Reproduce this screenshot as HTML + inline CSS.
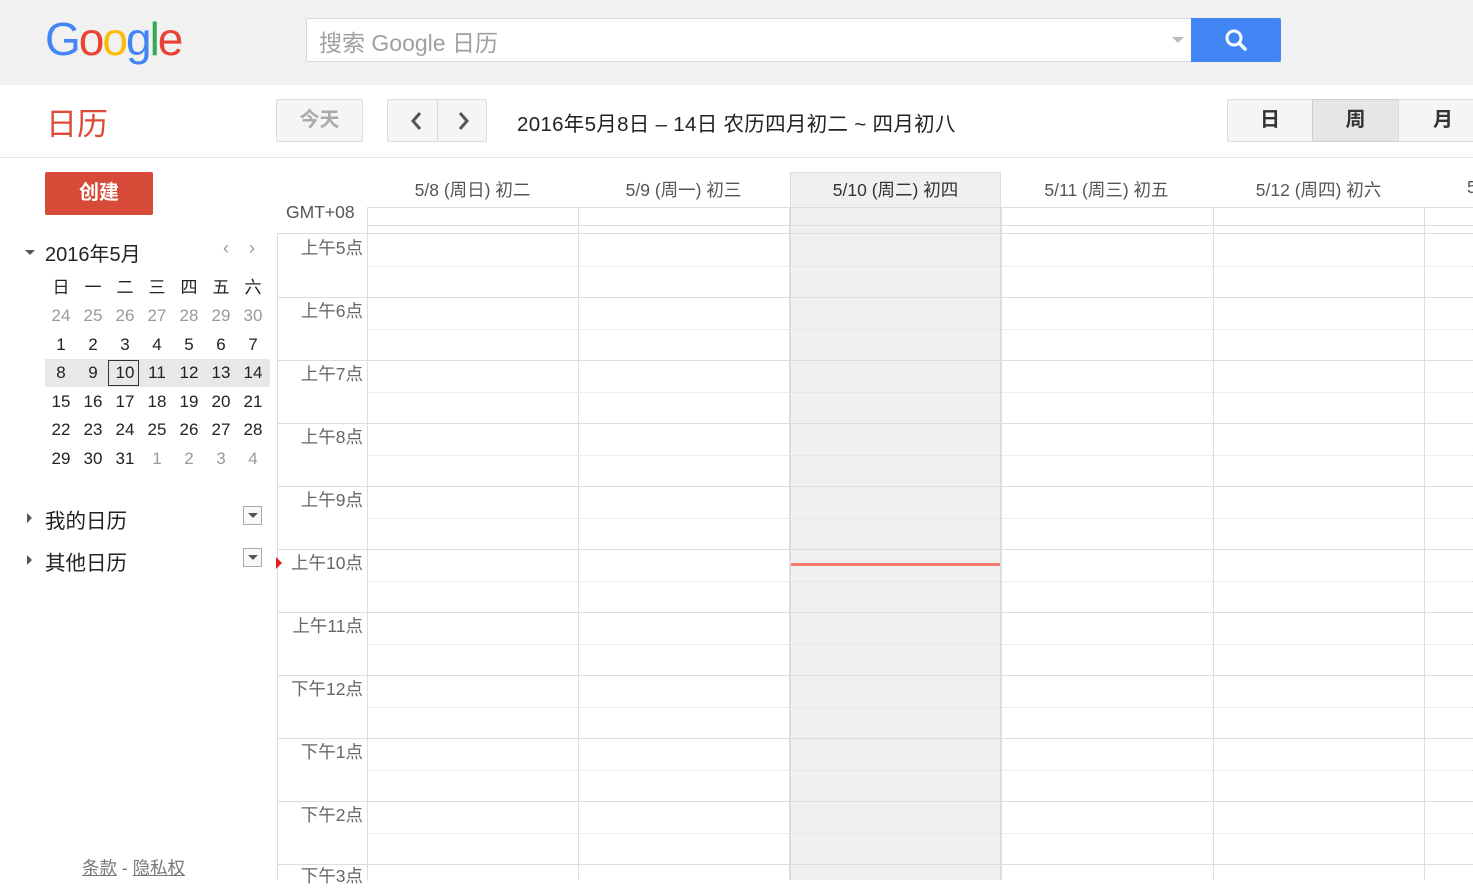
<!DOCTYPE html>
<html><head><meta charset="utf-8"><style>
*{margin:0;padding:0;box-sizing:border-box}
body{width:1473px;height:880px;overflow:hidden;background:#fff;font-family:"Liberation Sans","Noto Sans CJK SC",sans-serif;position:relative;color:#222}
.a{position:absolute}
.top{left:0;top:0;width:1473px;height:85px;background:#f1f1f1}
.logo{left:45px;top:12px;font-size:46px;letter-spacing:-2px;font-family:"Liberation Sans",sans-serif}
.search{left:306px;top:18px;width:886px;height:44px;background:#fff;border:1px solid #d9d9d9;font-size:23px;color:#a0a0a0;padding:5px 12px}
.sbtn{left:1191px;top:18px;width:90px;height:44px;background:#4285f4;border-radius:0 2px 2px 0}
.btn{background:#f5f5f5;border:1px solid #dcdcdc;border-radius:2px;text-align:center;color:#444}
.hl{background:#e8e8e8}
.day{font-size:17.5px;color:#555;text-align:center;width:211px}
.mini{font-size:17px;text-align:center;width:32px}
.g{color:#999}
.tl{font-size:17.5px;color:#666;text-align:right;width:86px;left:277px}
</style></head><body>
<div class="a top"></div>
<div class="a logo"><span style="color:#4285f4">G</span><span style="color:#ea4335">o</span><span style="color:#fbbc05">o</span><span style="color:#4285f4">g</span><span style="color:#34a853">l</span><span style="color:#ea4335">e</span></div>
<div class="a search">搜索 Google 日历</div>
<div class="a" style="left:1172px;top:37px;width:0;height:0;border-left:6px solid transparent;border-right:6px solid transparent;border-top:6px solid #bbb"></div>
<div class="a sbtn"><svg width="90" height="44"><circle cx="43" cy="20" r="7" fill="none" stroke="#fff" stroke-width="3"/><line x1="48" y1="25" x2="54" y2="31" stroke="#fff" stroke-width="3.5" stroke-linecap="round"/></svg></div>
<div class="a" style="left:46px;top:99px;font-size:31px;color:#dd4b39">日历</div>
<div class="a btn" style="left:276px;top:99px;width:87px;height:43px;font-size:20px;line-height:41px;color:#aaa;font-weight:bold">今天</div>
<div class="a btn" style="left:387px;top:99px;width:100px;height:43px"><div class="a" style="left:49px;top:0;width:1px;height:41px;background:#dcdcdc"></div>
<svg class="a" style="left:0;top:0" width="98" height="41"><path d="M32 13 L25 21 L32 29" fill="none" stroke="#555" stroke-width="3"/><path d="M72 13 L79 21 L72 29" fill="none" stroke="#555" stroke-width="3"/></svg></div>
<div class="a" style="left:517px;top:107px;font-size:20.5px;color:#222;letter-spacing:0.3px">2016年5月8日 – 14日 农历四月初二 ~ 四月初八</div>
<div class="a btn" style="left:1227px;top:99px;width:86px;height:43px;font-size:20px;line-height:41px;font-weight:bold;color:#333">日</div>
<div class="a btn" style="left:1312px;top:99px;width:87px;height:43px;font-size:20px;line-height:41px;font-weight:bold;color:#333;background:#e6e6e6;border-color:#ccc">周</div>
<div class="a btn" style="left:1398px;top:99px;width:90px;height:43px;font-size:20px;line-height:41px;font-weight:bold;color:#333">月</div>
<div class="a" style="left:0;top:157px;width:1473px;height:1px;background:#e5e5e5"></div>
<div class="a" style="left:45px;top:172px;width:108px;height:43px;background:#d84a38;border-radius:2px;color:#fff;font-size:20px;font-weight:bold;text-align:center;line-height:43px">创建</div>
<div class="a" style="left:25px;top:250px;border-left:5px solid transparent;border-right:5px solid transparent;border-top:5px solid #555"></div>
<div class="a" style="left:45px;top:238px;font-size:20px">2016年5月</div>
<div class="a" style="left:223px;top:238px;font-size:18px;color:#999">‹&nbsp;&nbsp;&nbsp;&nbsp;›</div>
<div class="a hl" style="left:45px;top:359px;width:225px;height:28px"></div>
<div class="a" style="left:108px;top:360px;width:31px;height:26px;border:1px solid #333"></div>
<div class="a" style="left:45px;top:277px">
<div style="display:flex;height:28px;line-height:22px"><div class="mini">日</div><div class="mini">一</div><div class="mini">二</div><div class="mini">三</div><div class="mini">四</div><div class="mini">五</div><div class="mini">六</div></div>
<div style="display:flex;height:29px;line-height:22px" class="g"><div class="mini">24</div><div class="mini">25</div><div class="mini">26</div><div class="mini">27</div><div class="mini">28</div><div class="mini">29</div><div class="mini">30</div></div>
<div style="display:flex;height:28px;line-height:22px"><div class="mini">1</div><div class="mini">2</div><div class="mini">3</div><div class="mini">4</div><div class="mini">5</div><div class="mini">6</div><div class="mini">7</div></div>
<div style="display:flex;height:29px;line-height:22px"><div class="mini">8</div><div class="mini">9</div><div class="mini">10</div><div class="mini">11</div><div class="mini">12</div><div class="mini">13</div><div class="mini">14</div></div>
<div style="display:flex;height:28px;line-height:22px"><div class="mini">15</div><div class="mini">16</div><div class="mini">17</div><div class="mini">18</div><div class="mini">19</div><div class="mini">20</div><div class="mini">21</div></div>
<div style="display:flex;height:29px;line-height:22px"><div class="mini">22</div><div class="mini">23</div><div class="mini">24</div><div class="mini">25</div><div class="mini">26</div><div class="mini">27</div><div class="mini">28</div></div>
<div style="display:flex;height:28px;line-height:22px"><div class="mini">29</div><div class="mini">30</div><div class="mini">31</div><div class="mini g">1</div><div class="mini g">2</div><div class="mini g">3</div><div class="mini g">4</div></div>
</div>
<div class="a" style="left:27px;top:513px;border-top:5px solid transparent;border-bottom:5px solid transparent;border-left:5px solid #555"></div>
<div class="a" style="left:45px;top:504px;font-size:20.5px">我的日历</div>
<div class="a" style="left:27px;top:555px;border-top:5px solid transparent;border-bottom:5px solid transparent;border-left:5px solid #555"></div>
<div class="a" style="left:45px;top:546px;font-size:20.5px">其他日历</div>
<div class="a" style="left:243px;top:506px;width:19px;height:19px;border:1px solid #aaa;background:#f8f8f8"><div style="margin:6px auto 0;width:0;border-left:5px solid transparent;border-right:5px solid transparent;border-top:5px solid #555"></div></div>
<div class="a" style="left:243px;top:548px;width:19px;height:19px;border:1px solid #aaa;background:#f8f8f8"><div style="margin:6px auto 0;width:0;border-left:5px solid transparent;border-right:5px solid transparent;border-top:5px solid #555"></div></div>
<div class="a" style="left:82px;top:855px;font-size:17.5px;color:#777"><u>条款</u> - <u>隐私权</u></div>
<!-- grid -->
<div class="a" style="left:790px;top:172px;width:211px;height:708px;background:#f0f0f0;border:1px solid #ddd;border-bottom:none"></div>
<div class="a" style="left:286px;top:202px;font-size:17.5px;color:#555">GMT+08</div>
<div class="a" style="left:367px;top:207px;width:1106px;height:19px;border-top:1px solid #ddd;border-bottom:1px solid #ddd"></div>
<div class="a" style="left:277px;top:233px;width:1196px;height:1px;background:#ddd"></div>
<div class="a" style="left:277px;top:233px;width:1px;height:647px;background:#ddd"></div>
<div class="a day" style="left:367px;top:177px">5/8 (周日) 初二</div>
<div class="a day" style="left:578px;top:177px">5/9 (周一) 初三</div>
<div class="a day" style="left:790px;top:177px;color:#333">5/10 (周二) 初四</div>
<div class="a day" style="left:1001px;top:177px">5/11 (周三) 初五</div>
<div class="a day" style="left:1213px;top:177px">5/12 (周四) 初六</div>
<div class="a" style="left:1467px;top:177px;font-size:17.5px;color:#555">5</div>
<svg class="a" style="left:0;top:0" width="1473" height="880">
<g stroke="#ddd" stroke-width="1">
<line x1="367.5" y1="207" x2="367.5" y2="880"/><line x1="578.5" y1="207" x2="578.5" y2="880"/><line x1="789.5" y1="207" x2="789.5" y2="880"/><line x1="1001.5" y1="207" x2="1001.5" y2="880"/><line x1="1213.5" y1="207" x2="1213.5" y2="880"/><line x1="1424.5" y1="207" x2="1424.5" y2="880"/>
<line x1="277" y1="297.5" x2="1473" y2="297.5"/><line x1="277" y1="360.5" x2="1473" y2="360.5"/><line x1="277" y1="423.5" x2="1473" y2="423.5"/><line x1="277" y1="486.5" x2="1473" y2="486.5"/><line x1="277" y1="549.5" x2="1473" y2="549.5"/><line x1="277" y1="612.5" x2="1473" y2="612.5"/><line x1="277" y1="675.5" x2="1473" y2="675.5"/><line x1="277" y1="738.5" x2="1473" y2="738.5"/><line x1="277" y1="801.5" x2="1473" y2="801.5"/><line x1="277" y1="864.5" x2="1473" y2="864.5"/>
</g>
<g stroke="#ddd" stroke-dasharray="1,1">
<line x1="368" y1="266.5" x2="1473" y2="266.5"/><line x1="368" y1="329.5" x2="1473" y2="329.5"/><line x1="368" y1="392.5" x2="1473" y2="392.5"/><line x1="368" y1="455.5" x2="1473" y2="455.5"/><line x1="368" y1="518.5" x2="1473" y2="518.5"/><line x1="368" y1="581.5" x2="1473" y2="581.5"/><line x1="368" y1="644.5" x2="1473" y2="644.5"/><line x1="368" y1="707.5" x2="1473" y2="707.5"/><line x1="368" y1="770.5" x2="1473" y2="770.5"/><line x1="368" y1="833.5" x2="1473" y2="833.5"/>
</g>
<line x1="791" y1="564.5" x2="1000" y2="564.5" stroke="#f57c6e" stroke-width="3"/>
<path d="M276 557 L282 563 L276 569 Z" fill="#dd2222"/>
</svg>
<div class="a tl" style="top:235px">上午5点</div>
<div class="a tl" style="top:298px">上午6点</div>
<div class="a tl" style="top:361px">上午7点</div>
<div class="a tl" style="top:424px">上午8点</div>
<div class="a tl" style="top:487px">上午9点</div>
<div class="a tl" style="top:550px">上午10点</div>
<div class="a tl" style="top:613px">上午11点</div>
<div class="a tl" style="top:676px">下午12点</div>
<div class="a tl" style="top:739px">下午1点</div>
<div class="a tl" style="top:802px">下午2点</div>
<div class="a tl" style="top:863px">下午3点</div>
</body></html>
